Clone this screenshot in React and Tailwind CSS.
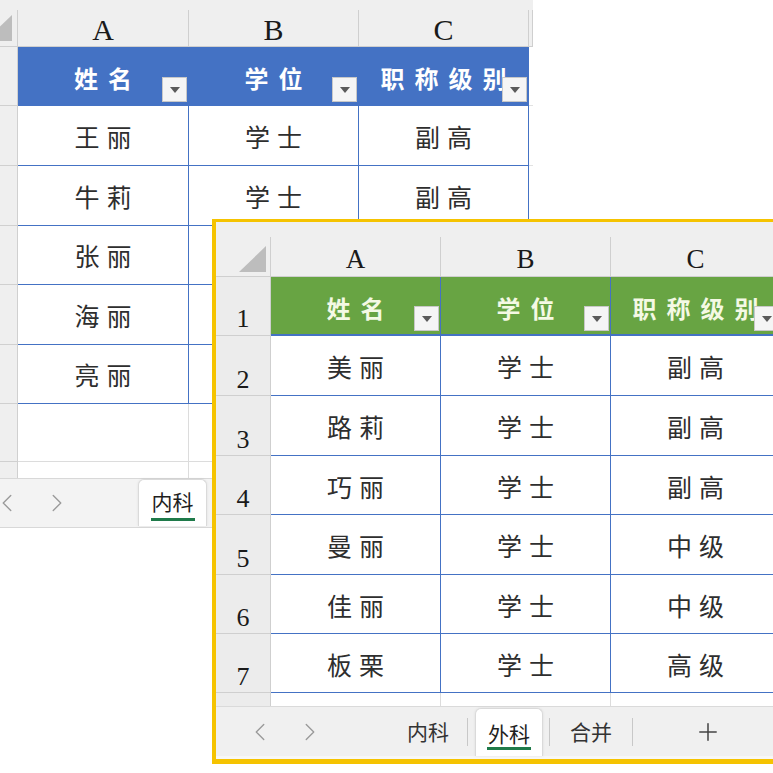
import { ChevronLeft, ChevronRight, Plus } from "lucide-react";

const cjk = "font-['Noto_Sans_CJK_SC',sans-serif]";
const serif = "font-['Liberation_Serif',serif]";

// rows 3-5 sit under the second window past column A, so only column A is filled there
const backRows = [
    ["王丽", "学士", "副高"],
    ["牛莉", "学士", "副高"],
    ["张丽", "", ""],
    ["海丽", "", ""],
    ["亮丽", "", ""],
];
const backHeights = ["h-[60px]", "h-[60px]", "h-[59px]", "h-[60px]", "h-[59px]"];

const frontRows = [
    ["美丽", "学士", "副高"],
    ["路莉", "学士", "副高"],
    ["巧丽", "学士", "副高"],
    ["曼丽", "学士", "中级"],
    ["佳丽", "学士", "中级"],
    ["板栗", "学士", "高级"],
];
const frontHeights = ["h-[60px]", "h-[60px]", "h-[59px]", "h-[60px]", "h-[59px]", "h-[59px]"];

const heads = ["姓名", "学位", "职称级别"];

function FilterButton() {
    return (
        <span className="absolute right-[1px] bottom-[3px] flex h-[25px] w-[25px] items-center justify-center bg-[#f5f5f5] border border-[#c8c8c8]">
            <svg width="10" height="6" viewBox="0 0 10 6">
                <path d="M0 0h10L5 6z" fill="#5a5a5a" />
            </svg>
        </span>
    );
}

function Corner({ className }) {
    return (
        <svg className={`absolute ${className}`} width="27" height="26" viewBox="0 0 27 26">
            <polygon points="27,0 27,26 0,26" fill="#bdbdbd" />
        </svg>
    );
}

function ActiveTab({ label, className, gap }) {
    return (
        <div className={`flex flex-col items-center rounded-t-[6px] bg-white border border-b-0 border-[#dadada] shadow-[0_0_3px_rgba(0,0,0,0.08)] ${className}`}>
            <span className={`${cjk} text-[21px] leading-none text-[#1e1e1e]`}>{label}</span>
            <span className={`${gap} h-[3px] w-[44px] bg-[#1f7a4a]`} />
        </div>
    );
}

function BackSheet() {
    return (
        <div className="absolute left-0 top-0 w-[533px] h-[528px] overflow-hidden bg-white">
            <div className="h-[10px] bg-[#efefef]" />

            {/* column letters */}
            <div className="grid grid-cols-[18px_171px_170px_170px_1fr] h-[37px] bg-[#efefef]">
                <div className="relative border-r border-b border-[#cfcfcf]">
                    <Corner className="right-[5px] bottom-[5px]" />
                </div>
                {["A", "B", "C", ""].map((l, i) => (
                    <div key={i} className={`flex items-end justify-center pb-[1px] border-r border-b border-[#cfcfcf] ${serif} text-[30px] leading-none text-[#1a1a1a]`}>
                        {l}
                    </div>
                ))}
            </div>

            {/* table header */}
            <div className="grid grid-cols-[18px_171px_170px_170px_1fr] h-[59px]">
                <div className="bg-[#efefef] border-r border-b border-[#d0d0d0]" />
                {heads.map((h) => (
                    <div key={h} className={`relative flex items-center justify-center pt-[4px] pl-[10px] bg-[#4472c4] border-r border-b border-[#4472c4] ${cjk} font-bold text-[24px] tracking-[10px] text-white`}>
                        {h}
                        <FilterButton />
                    </div>
                ))}
                <div className="border-b border-[#e2e2e2]" />
            </div>

            {backRows.map((row, r) => (
                <div key={r} className={`grid grid-cols-[18px_171px_170px_170px_1fr] ${backHeights[r]}`}>
                    <div className="bg-[#efefef] border-r border-b border-[#d0d0d0]" />
                    {row.map((c, i) => (
                        <div key={i} className={`flex items-center justify-center pt-[2px] pl-[7px] border-r border-b border-[#4472c4] ${cjk} text-[25px] tracking-[7px] text-[#2e2e2e]`}>
                            {c}
                        </div>
                    ))}
                    <div className="border-b border-[#e2e2e2]" />
                </div>
            ))}

            {/* empty rows */}
            <div className="grid grid-cols-[18px_171px_170px_170px_1fr] h-[58px]">
                <div className="bg-[#efefef] border-r border-b border-[#d0d0d0]" />
                <div className="border-r border-b border-[#dcdcdc]" />
                <div className="border-r border-b border-[#dcdcdc]" />
                <div className="border-r border-b border-[#dcdcdc]" />
                <div className="border-b border-[#dcdcdc]" />
            </div>
            <div className="grid grid-cols-[18px_171px_170px_170px_1fr] h-[16px]">
                <div className="bg-[#efefef] border-r border-[#d0d0d0]" />
                <div className="border-r border-[#dcdcdc]" />
                <div className="border-r border-[#dcdcdc]" />
                <div className="border-r border-[#dcdcdc]" />
                <div />
            </div>

            {/* sheet tabs */}
            <div className="flex items-center h-[50px] bg-[#f3f3f3] border-t border-b border-[#d8d8d8] text-[#9a9a9a]">
                <ChevronLeft size={30} strokeWidth={1.1} className="ml-[-8px]" />
                <ChevronRight size={30} strokeWidth={1.1} className="ml-[20px]" />
                <ActiveTab label="内科" className="self-start ml-[66px] w-[69px] h-[47px] pt-[11px]" gap="mt-[6px]" />
            </div>
        </div>
    );
}

function FrontSheet() {
    return (
        <div className="absolute left-[212px] top-[219px] w-[590px] h-[545px] overflow-hidden bg-white border-l-4 border-t-[3px] border-b-[5px] border-[#f5c300]">
            <div className="h-[15px] bg-[#efefef]" />

            {/* column letters */}
            <div className="grid grid-cols-[55px_170px_170px_170px_1fr] h-[40px] bg-[#efefef]">
                <div className="relative border-r border-b border-[#cfcfcf]">
                    <Corner className="right-[4px] bottom-[4px]" />
                </div>
                {["A", "B", "C", ""].map((l, i) => (
                    <div key={i} className={`flex items-end justify-center pb-[3px] border-r border-b border-[#cfcfcf] ${serif} text-[27px] leading-none text-[#1a1a1a]`}>
                        {l}
                    </div>
                ))}
            </div>

            {/* table header */}
            <div className="grid grid-cols-[55px_170px_170px_170px_1fr] h-[59px]">
                <div className={`flex items-end justify-center pb-[3px] bg-[#ececec] border-r border-b border-[#cfcfcf] ${serif} text-[26px] leading-none text-[#1a1a1a]`}>
                    1
                </div>
                {heads.map((h) => (
                    <div key={h} className={`relative flex items-center justify-center pt-[4px] pl-[10px] bg-[#68a443] border-r border-b-2 border-[#4472c4] ${cjk} font-bold text-[24px] tracking-[10px] text-[#f4f9e4]`}>
                        {h}
                        <FilterButton />
                    </div>
                ))}
                <div />
            </div>

            {frontRows.map((row, r) => (
                <div key={r} className={`grid grid-cols-[55px_170px_170px_170px_1fr] ${frontHeights[r]}`}>
                    <div className={`flex items-end justify-center pb-[2px] bg-[#ececec] border-r border-b border-[#cfcfcf] ${serif} text-[26px] leading-none text-[#1a1a1a]`}>
                        {r + 2}
                    </div>
                    {row.map((c, i) => (
                        <div key={i} className={`flex items-center justify-center pt-[3px] pl-[7px] border-r border-b border-[#4472c4] ${cjk} text-[25px] tracking-[7px] text-[#2e2e2e]`}>
                            {c}
                        </div>
                    ))}
                    <div />
                </div>
            ))}

            <div className="grid grid-cols-[55px_170px_170px_170px_1fr] h-[13px]">
                <div className="bg-[#ececec] border-r border-[#cfcfcf]" />
                <div className="border-r border-[#dcdcdc]" />
                <div className="border-r border-[#dcdcdc]" />
                <div className="border-r border-[#dcdcdc]" />
                <div />
            </div>

            {/* sheet tabs */}
            <div className={`flex items-center h-[53px] bg-[#f0f0f0] border-t border-b-[3px] border-t-[#dadada] border-b-[#f7f7f7] ${cjk} text-[21px] leading-none text-[#333]`}>
                <ChevronLeft size={30} strokeWidth={1.1} className="ml-[29px] text-[#9a9a9a]" />
                <ChevronRight size={30} strokeWidth={1.1} className="ml-[20px] text-[#9a9a9a]" />
                <span className="ml-[82px]">内科</span>
                <span className="ml-[18px] w-px h-[28px] bg-[#c8c8c8]" />
                <ActiveTab label="外科" className="self-start mt-[1px] ml-[7px] w-[68px] h-[48px] pt-[14px]" gap="mt-[3px]" />
                <span className="ml-[6px] w-px h-[28px] bg-[#c8c8c8]" />
                <span className="ml-[20px]">合并</span>
                <span className="ml-[20px] w-px h-[28px] bg-[#c8c8c8]" />
                <Plus size={28} strokeWidth={1.3} className="ml-[61px] text-[#444]" />
            </div>
        </div>
    );
}

export default function App() {
    return (
        <div className="relative w-[773px] h-[773px] overflow-hidden bg-white">
            <BackSheet />
            <FrontSheet />
        </div>
    );
}
